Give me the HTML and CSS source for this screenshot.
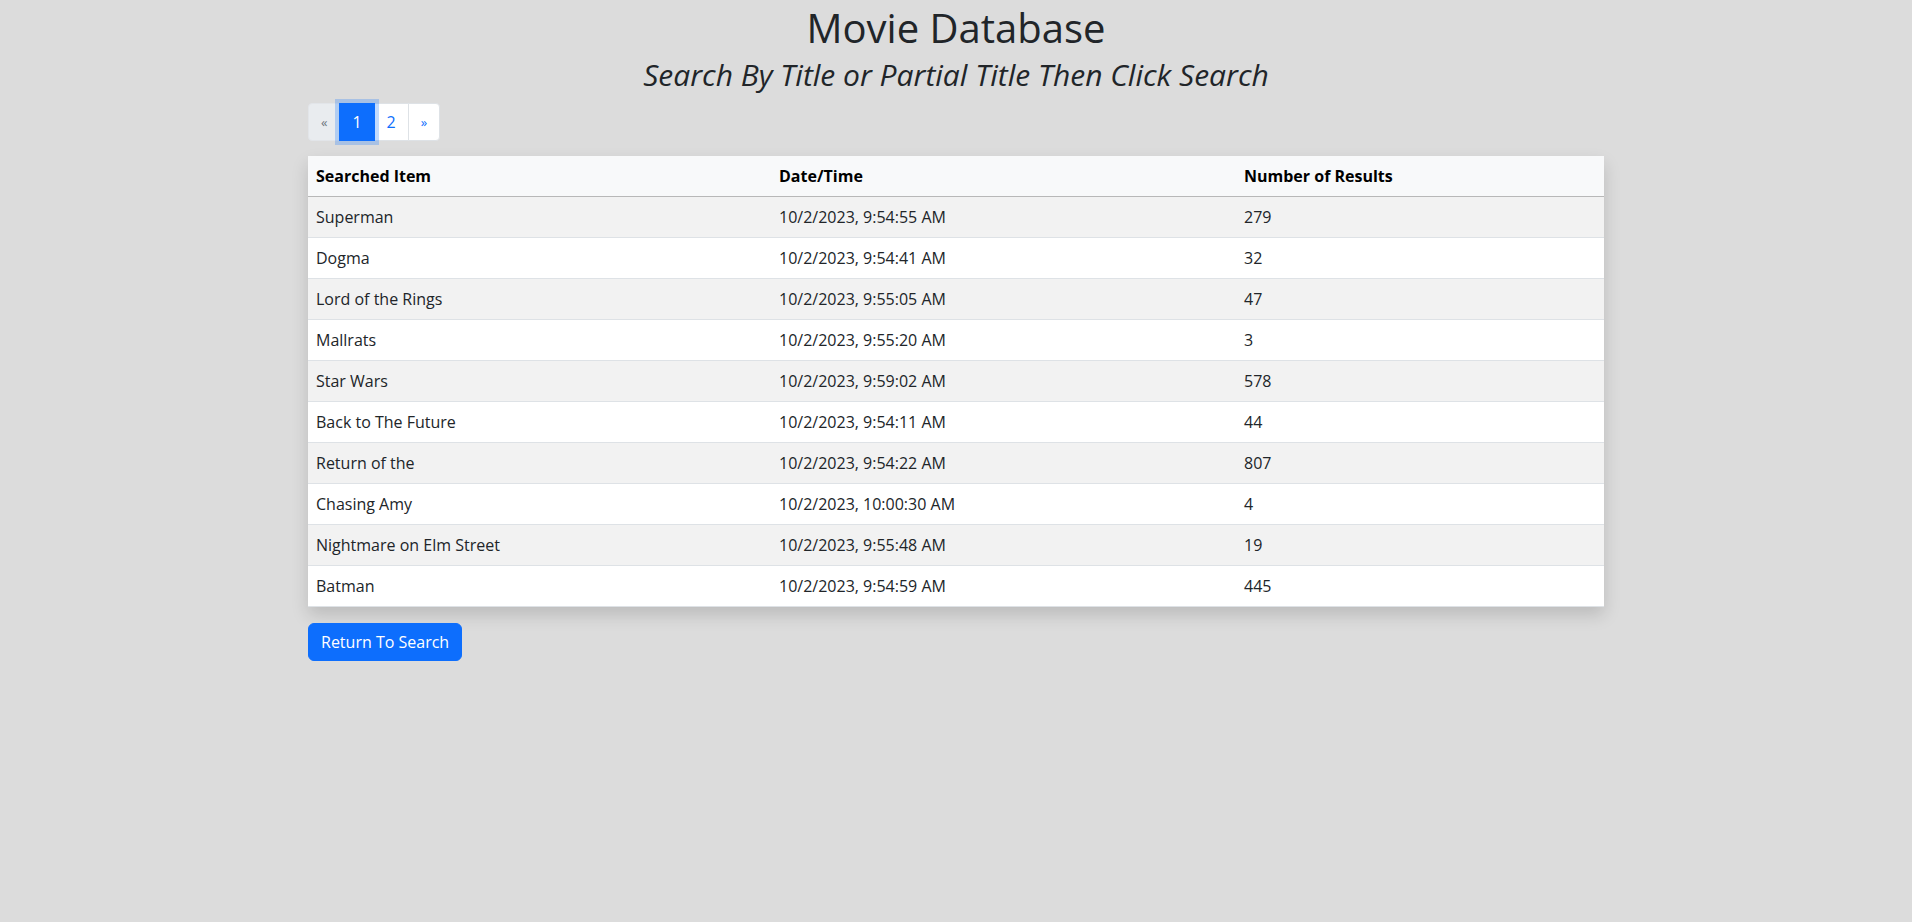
FILE: index.html
```html
<!DOCTYPE html>
<html lang="en">
<head>
<meta charset="utf-8">
<title>Movie Database</title>
<link rel="stylesheet" href="styles.css">
</head>
<body>
<div class="container">
  <h1 class="title">Movie Database</h1>
  <h2 class="subtitle">Search By Title or Partial Title Then Click Search</h2>
  <ul class="pagination">
    <li class="page-item disabled"><span class="page-link arrow">&laquo;</span></li>
    <li class="page-item active"><span class="page-link">1</span></li>
    <li class="page-item"><span class="page-link">2</span></li>
    <li class="page-item"><span class="page-link arrow">&raquo;</span></li>
  </ul>
  <table class="table">
    <thead>
      <tr><th class="c1">Searched Item</th><th class="c2">Date/Time</th><th class="c3">Number of Results</th></tr>
    </thead>
    <tbody>
      <tr><td>Superman</td><td>10/2/2023, 9:54:55 AM</td><td>279</td></tr>
      <tr><td>Dogma</td><td>10/2/2023, 9:54:41 AM</td><td>32</td></tr>
      <tr><td>Lord of the Rings</td><td>10/2/2023, 9:55:05 AM</td><td>47</td></tr>
      <tr><td>Mallrats</td><td>10/2/2023, 9:55:20 AM</td><td>3</td></tr>
      <tr><td>Star Wars</td><td>10/2/2023, 9:59:02 AM</td><td>578</td></tr>
      <tr><td>Back to The Future</td><td>10/2/2023, 9:54:11 AM</td><td>44</td></tr>
      <tr><td>Return of the</td><td>10/2/2023, 9:54:22 AM</td><td>807</td></tr>
      <tr><td>Chasing Amy</td><td>10/2/2023, 10:00:30 AM</td><td>4</td></tr>
      <tr><td>Nightmare on Elm Street</td><td>10/2/2023, 9:55:48 AM</td><td>19</td></tr>
      <tr><td>Batman</td><td>10/2/2023, 9:54:59 AM</td><td>445</td></tr>
    </tbody>
  </table>
  <button class="btn" type="button">Return To Search</button>
</div>
</body>
</html>
```
FILE: styles.css
```css
* { box-sizing: border-box; }
html, body { margin: 0; padding: 0; }
body {
  background: #dcdcdc;
  color: #212529;
  font-family: "Open Sans", "Liberation Sans", sans-serif;
  font-size: 16px;
  line-height: 1.5;
}
.container {
  max-width: 1320px;
  margin: 0 auto;
  padding: 0 12px;
}
.title {
  margin: 0;
  padding-top: 4px;
  text-align: center;
  font-size: 40px;
  font-weight: 400;
  line-height: 48px;
  color: #212529;
}
.subtitle {
  margin: 5px 0 0;
  text-align: center;
  font-size: 30px;
  font-weight: 400;
  font-style: italic;
  line-height: 36px;
  color: #212529;
}
.pagination {
  display: flex;
  list-style: none;
  margin: 10px 0 15px;
  padding: 0;
}
.page-link {
  display: block;
  padding: 6px 12px;
  line-height: 24px;
  font-size: 16px;
  color: #0d6efd;
  background: #fff;
  border: 1px solid #dee2e6;
  margin-left: -1px;
  position: relative;
}
.page-item:first-child .page-link {
  margin-left: 0;
  border-radius: 4px 0 0 4px;
}
.page-item:last-child .page-link { border-radius: 0 4px 4px 0; }
.page-link.arrow { font-size: 13px; padding: 6px 12px; }
.disabled .page-link {
  color: #6c757d;
  background: #e9ecef;
  border-color: #e2e5e9;
}
.active .page-link {
  z-index: 3;
  color: #fff;
  background: #0d6efd;
  border-color: #0d6efd;
  box-shadow: 0 0 0 4px rgba(13, 110, 253, 0.25);
}
.table {
  width: 100%;
  border-collapse: collapse;
  margin-bottom: 16px;
  background: #fff;
  box-shadow: 0 8px 16px rgba(0, 0, 0, 0.15);
  color: #212529;
}
.table th, .table td {
  padding: 8px;
  text-align: left;
  border-bottom: 1px solid #dee2e6;
}
.table th {
  font-weight: 700;
  color: #000;
  background: #f8f9fa;
  border-bottom: 1px solid #b8b8b8;
}
.c1 { width: 463px; }
.c2 { width: 465px; }
.c3 { width: 368px; }
.table tbody tr:nth-child(odd) td { background: #f2f2f2; }
.btn {
  display: inline-block;
  font-family: inherit;
  font-size: 16px;
  line-height: 24px;
  padding: 6px 12px;
  color: #fff;
  background: #0d6efd;
  border: 1px solid #0d6efd;
  border-radius: 6px;
}
```
